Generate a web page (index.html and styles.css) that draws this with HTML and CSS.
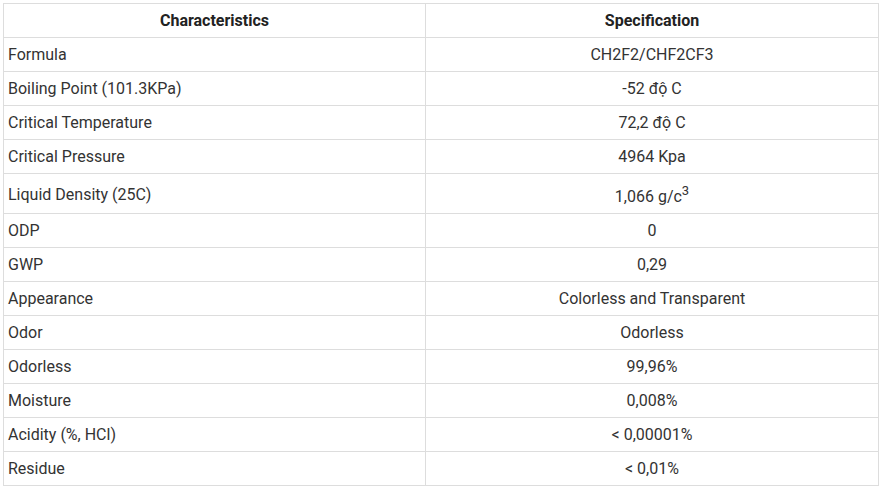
FILE: index.html
```html
<!DOCTYPE html>
<html>
<head>
<meta charset="utf-8">
<link rel="stylesheet" href="styles.css">
</head>
<body>
<table class="spec">
  <thead>
    <tr><th class="c1">Characteristics</th><th>Specification</th></tr>
  </thead>
  <tbody>
    <tr><td>Formula</td><td class="v">CH2F2/CHF2CF3</td></tr>
    <tr><td>Boiling Point (101.3KPa)</td><td class="v">-52 độ C</td></tr>
    <tr><td>Critical Temperature</td><td class="v">72,2 độ C</td></tr>
    <tr><td>Critical Pressure</td><td class="v">4964 Kpa</td></tr>
    <tr class="tall"><td>Liquid Density (25C)</td><td class="v sup-cell">1,066 g/c<sup>3</sup></td></tr>
    <tr><td>ODP</td><td class="v">0</td></tr>
    <tr><td>GWP</td><td class="v">0,29</td></tr>
    <tr><td>Appearance</td><td class="v">Colorless and Transparent</td></tr>
    <tr><td>Odor</td><td class="v">Odorless</td></tr>
    <tr><td>Odorless</td><td class="v">99,96%</td></tr>
    <tr><td>Moisture</td><td class="v">0,008%</td></tr>
    <tr><td>Acidity (%, HCl)</td><td class="v">&lt; 0,00001%</td></tr>
    <tr><td>Residue</td><td class="v">&lt; 0,01%</td></tr>
  </tbody>
</table>
</body>
</html>
```
FILE: styles.css
```css
html, body {
  margin: 0;
  background: #fff;
}
body {
  padding: 3px;
  font-family: Roboto, "Liberation Sans", sans-serif;
  font-size: 16px;
  color: #333;
}
.spec {
  width: 876px;
  border-collapse: collapse;
  table-layout: fixed;
}
.spec th, .spec td {
  border: 1px solid #ddd;
  height: 34px;
  padding: 0 4px;
  line-height: 20px;
  box-sizing: border-box;
}
.spec th {
  font-weight: bold;
  color: #222;
  text-align: center;
}
.spec th.c1 {
  width: 422px;
}
.spec td {
  text-align: left;
}
.spec td.v {
  text-align: center;
}
.spec tr.tall td {
  height: 40px;
  padding-top: 2px;
}
.spec tr.tall td.sup-cell {
  padding-top: 6px;
}
.spec sup {
  font-size: 13px;
  line-height: 0;
  vertical-align: 7px;
}
```
